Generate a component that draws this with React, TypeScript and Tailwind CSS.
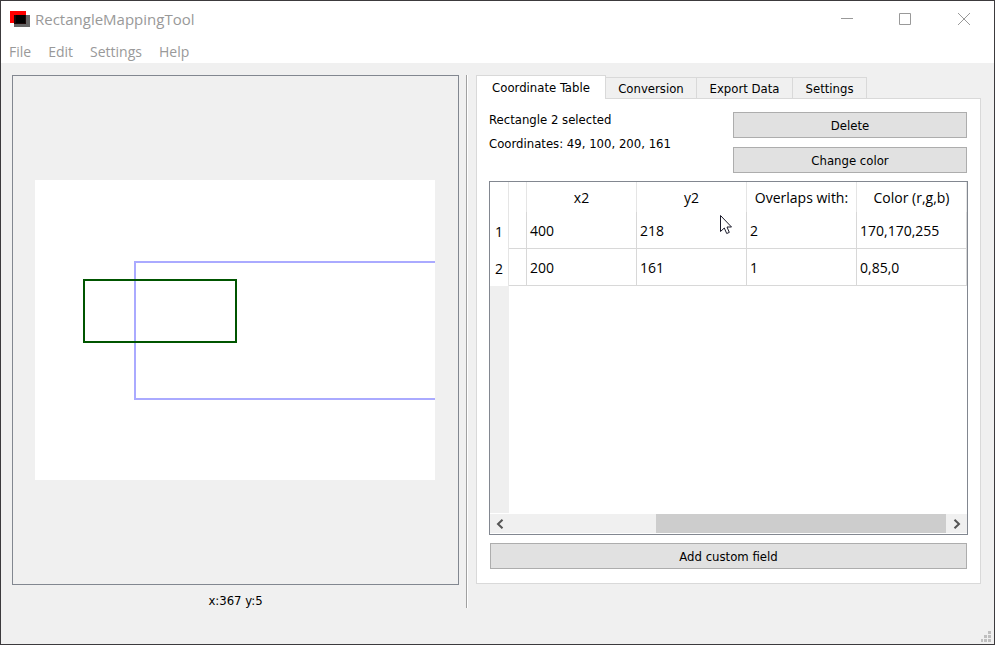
import type { ReactNode } from "react";

const uiFont = "font-['DejaVu_Sans_Condensed','DejaVu_Sans',sans-serif]";
const systemFont = "font-['Open_Sans',sans-serif]";

const menus = ["File", "Edit", "Settings", "Help"];
const tabs = ["Conversion", "Export Data", "Settings"];
const columns = ["x2", "y2", "Overlaps with:", "Color (r,g,b)"];
const rows = [
  ["400", "218", "2", "170,170,255"],
  ["200", "161", "1", "0,85,0"],
];

function AppIcon() {
  return (
    <svg width="20" height="16" viewBox="0 0 20 16" shapeRendering="crispEdges" aria-hidden="true">
      <rect width="16" height="12" fill="#ff0000" />
      <rect x="4" y="4" width="16" height="12" fill="#666666" />
      <rect x="4" y="4" width="12" height="9" fill="#1c0808" />
      <rect x="6" y="4" width="9" height="8" fill="#000000" />
    </svg>
  );
}

function WindowButton({ label, children }: { label: string; children: ReactNode }) {
  return (
    <button type="button" aria-label={label} className="flex h-9 w-[59px] items-center justify-center">
      <svg width="13" height="13" viewBox="0 0 13 13" fill="none" stroke="#999999" aria-hidden="true">
        {children}
      </svg>
    </button>
  );
}

function TitleBar() {
  return (
    <header className="flex h-9 items-center bg-white pl-[9px] text-[#999999]">
      <AppIcon />
      <h1 className="ml-[5px] flex-1 text-[15px] leading-5">RectangleMappingTool</h1>
      <WindowButton label="Minimize">
        <path d="M1 5.5H13" />
      </WindowButton>
      <WindowButton label="Maximize">
        <path d="M.5 .5H11.5V11.5H.5Z" />
      </WindowButton>
      <WindowButton label="Close">
        <path d="M0 0L12 12M12 0L0 12" />
      </WindowButton>
    </header>
  );
}

function PushButton({ children }: { children: ReactNode }) {
  return (
    <button
      type="button"
      className="h-[26px] w-full border border-[#adadad] bg-[#e1e1e1] pt-[2px] text-center text-[13px] leading-4"
    >
      {children}
    </button>
  );
}

function Canvas() {
  return (
    <section className="flex min-w-0 flex-col">
      <div className="flex flex-1 items-center justify-center border border-[#828790] pr-px">
        <svg width="400" height="300" viewBox="0 0 400 300" className="bg-white" fill="none" strokeWidth="2" role="img" aria-label="Mapped rectangles">
          <rect x="100" y="82" width="310" height="137" stroke="#aaaaff" />
          <rect x="49" y="100" width="152" height="62" stroke="#005500" />
        </svg>
      </div>
      <p className="h-[23px] pt-2 text-center text-[13px] leading-4">x:367 y:5</p>
    </section>
  );
}

function Pointer() {
  return (
    <svg width="12" height="20" viewBox="0 0 12 20" className="absolute top-[3px] left-[83px]" aria-hidden="true">
      <path d="M.5 .5V16.5L4.300 13L6.700 18.500L9.300 17.400L7 12H11.500Z" fill="#ffffff" stroke="#1a1a2a" />
    </svg>
  );
}

function CoordinateTable() {
  return (
    <div className="flex min-h-[354px] flex-1 flex-col border border-[#828790] bg-white">
      <div className={`${systemFont} flex flex-1 flex-col`}>
        <table className="w-full table-fixed border-separate border-spacing-0 text-[14px] leading-5">
          <colgroup>
            <col className="w-[19px]" />
            <col className="w-[18px]" />
            <col />
            <col />
            <col />
            <col />
          </colgroup>
          <thead>
            <tr className="h-[30px]">
              <td className="border-r border-[#e5e5e5]" />
              <td className="border-r border-[#e5e5e5]" />
              {columns.map((name) => (
                <th key={name} scope="col" className="border-r border-[#e5e5e5] p-0 pt-[2px] text-center font-normal whitespace-nowrap">
                  {name}
                </th>
              ))}
            </tr>
          </thead>
          <tbody>
            {rows.map((row, r) => (
              <tr key={r} className="h-[37px]">
                <th scope="row" className="border-r border-[#e5e5e5] p-0 pt-[3px] text-center font-normal">
                  {r + 1}
                </th>
                <td className="border-r border-b border-[#d8d8d8] p-0" />
                {row.map((value, c) => (
                  <td key={c} className="relative border-r border-b border-[#d8d8d8] p-0 pt-[2px] pl-[3px]">
                    {value}
                    {r === 0 && c === 1 && <Pointer />}
                  </td>
                ))}
              </tr>
            ))}
          </tbody>
        </table>
        <div className="w-[19px] flex-1 bg-[#efefef]" />
      </div>
      <div className="mt-px mb-px flex h-[19px] bg-[#f0f0f0]">
        <button type="button" aria-label="Scroll left" className="flex w-[19px] items-center justify-center">
          <svg width="8" height="10" viewBox="0 0 8 10" fill="none" stroke="#555555" strokeWidth="2" aria-hidden="true">
            <path d="M6.500 .7L2 5L6.500 9.300" />
          </svg>
        </button>
        <div className="grid flex-1 grid-cols-[147fr_290fr]">
          <div className="col-start-2 bg-[#cdcdcd]" />
        </div>
        <button type="button" aria-label="Scroll right" className="flex w-[21px] items-center justify-center">
          <svg width="8" height="10" viewBox="0 0 8 10" fill="none" stroke="#555555" strokeWidth="2" aria-hidden="true">
            <path d="M1.500 .7L6 5L1.500 9.300" />
          </svg>
        </button>
      </div>
    </div>
  );
}

function TabWidget() {
  return (
    <section className="flex min-w-0 flex-col pb-6">
      <div role="tablist" className="flex items-end text-[13px] leading-4">
        <button
          type="button"
          role="tab"
          aria-selected="true"
          className="relative z-10 -mb-px h-6 w-[130px] border border-b-0 border-[#d9d9d9] bg-white text-center"
        >
          Coordinate Table
        </button>
        {tabs.map((name) => (
          <button
            key={name}
            type="button"
            role="tab"
            aria-selected="false"
            className={`h-[21px] border-t border-r border-[#d9d9d9] bg-[#f0f0f0] pt-[2px] text-center ${
              name === "Conversion" ? "w-[91px]" : name === "Export Data" ? "w-24" : "w-[74px]"
            }`}
          >
            {name}
          </button>
        ))}
      </div>
      <div role="tabpanel" className="flex flex-1 flex-col border border-[#d9d9d9] bg-white pt-[13px] pr-3 pb-[14px] pl-3">
        <div className="mb-2 grid grid-cols-[244fr_235fr]">
          <div className="flex flex-col gap-2 text-[13px] leading-4">
            <p>Rectangle 2 selected</p>
            <p>Coordinates: 49, 100, 200, 161</p>
          </div>
          <div className="flex flex-col gap-[9px] pr-px">
            <PushButton>Delete</PushButton>
            <PushButton>Change color</PushButton>
          </div>
        </div>
        <CoordinateTable />
        <div className="mt-2 px-px">
          <PushButton>Add custom field</PushButton>
        </div>
      </div>
    </section>
  );
}

export default function App() {
  return (
    <div className={`${uiFont} flex min-h-screen flex-col border border-[#3c3a3d] bg-[#f0f0f0] text-black`}>
      <div className={systemFont}>
        <TitleBar />
        <nav className="flex h-[26px] gap-[17px] bg-white pt-[5px] pl-2 text-[14px] leading-5 text-[#999999]">
          {menus.map((name) => (
            <button key={name} type="button" className="h-5">
              {name}
            </button>
          ))}
        </nav>
      </div>
      <main className="grid flex-1 grid-cols-[447fr_17px_505fr] pt-3 pr-[13px] pl-[11px]">
        <Canvas />
        <div className="ml-[7px] w-[2px] border-r border-l border-r-white border-l-[#a0a0a0]" />
        <TabWidget />
      </main>
      <footer className="flex h-9 items-end justify-end pr-[3px] pb-[2px]">
        <svg width="10" height="11" viewBox="0 0 10 11" fill="#bfbfbf" shapeRendering="crispEdges" aria-hidden="true">
          <path d="M7 0h3v3h-3zM3 4h3v3h-3zM7 4h3v3h-3zM0 8h2v3h-2zM3 8h3v3h-3zM7 8h3v3h-3z" />
        </svg>
      </footer>
    </div>
  );
}
